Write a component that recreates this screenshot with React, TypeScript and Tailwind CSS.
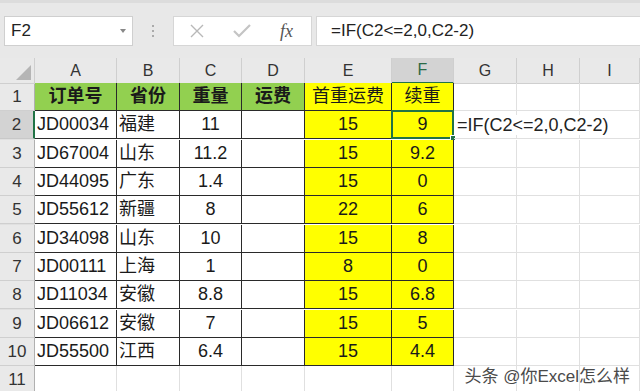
import React from 'react';

const cols = ['A', 'B', 'C', 'D', 'E', 'F', 'G', 'H', 'I'];

const rows: string[][] = [
  ['JD00034', '福建', '11', '', '15', '9'],
  ['JD67004', '山东', '11.2', '', '15', '9.2'],
  ['JD44095', '广东', '1.4', '', '15', '0'],
  ['JD55612', '新疆', '8', '', '22', '6'],
  ['JD34098', '山东', '10', '', '15', '8'],
  ['JD00111', '上海', '1', '', '8', '0'],
  ['JD11034', '安徽', '8.8', '', '15', '6.8'],
  ['JD06612', '安徽', '7', '', '15', '5'],
  ['JD55500', '江西', '6.4', '', '15', '4.4'],
];

const heads = ['订单号', '省份', '重量', '运费', '首重运费', '续重'];
const rowH = ['h-[28px]', 'h-[29px]', 'h-[28px]', 'h-[28px]', 'h-[29px]', 'h-[28px]', 'h-[28px]', 'h-[29px]', 'h-[28px]', 'h-[28px]'];
const gridCols = 'grid grid-cols-[35px_82px_63px_62px_63px_87px_62px_63px_63px_1fr]';

const font = "font-['Liberation_Sans','Noto_Sans_CJK_SC',sans-serif]";

export default function App() {
  return (
    <div className={`w-[640px] h-[391px] overflow-hidden bg-white text-[#222] ${font}`}>
      {/* Toolbar with name box and formula bar */}
      <div className="h-[58px] bg-[#e8e8e8] border-t-[3px] border-[#dcdcdc] flex items-start pt-[13px] pl-[4px] gap-0">
        <div className="w-[129px] h-[30px] bg-white border border-[#cfcfcf] flex items-center justify-between pl-[6px] pr-[6px]">
          <span className="text-[17px] text-[#222]">F2</span>
          <span className="w-0 h-0 border-l-[3px] border-r-[3px] border-t-[4px] border-l-transparent border-r-transparent border-t-[#888]" />
        </div>
        <div className="w-[40px] h-[30px] flex flex-col items-center justify-center gap-[3px]">
          <span className="w-[2px] h-[2px] bg-[#aaa]" />
          <span className="w-[2px] h-[2px] bg-[#aaa]" />
          <span className="w-[2px] h-[2px] bg-[#aaa]" />
        </div>
        <div className="w-[139px] h-[30px] bg-white border border-[#d6d6d6] flex items-center justify-between px-[16px]">
          <svg width="14" height="14" viewBox="0 0 14 14">
            <path d="M1 1L13 13M13 1L1 13" stroke="#b8b8b8" strokeWidth="1.4" fill="none" />
          </svg>
          <svg width="18" height="14" viewBox="0 0 18 14">
            <path d="M1 7L6 12L17 1" stroke="#c4c4c4" strokeWidth="2.2" fill="none" />
          </svg>
          <span className="font-['Liberation_Serif',serif] italic text-[18px] text-[#555] pr-[2px]">fx</span>
        </div>
        <div className="ml-[4px] flex-1 h-[30px] bg-white border-y border-l border-[#d6d6d6] flex items-center pl-[14px]">
          <span className="text-[17px] text-[#222]">=IF(C2&lt;=2,0,C2-2)</span>
        </div>
      </div>

      {/* Column headers */}
      <div className={`${gridCols} h-[25px] bg-[#e9e9e9]`}>
        <div className="relative border-r border-b border-[#cfcfcf]">
          <div className="absolute right-[3px] bottom-[3px] w-0 h-0 border-l-[15px] border-t-[15px] border-l-transparent border-t-transparent border-b-0 border-r-[15px] border-r-[#b5b5b5]" />
        </div>
        {cols.map((c) => (
          <div
            key={c}
            className={
              c === 'F'
                ? 'flex items-center justify-center text-[16px] bg-[#d3d3d3] text-[#2b6a46] border-r border-[#cfcfcf] border-b-2 border-b-[#217346]'
                : 'flex items-center justify-center text-[16px] text-[#333] border-r border-b border-[#cfcfcf]'
            }
          >
            {c}
          </div>
        ))}
        <div className="border-b border-[#cfcfcf]" />
      </div>

      {/* Rows */}
      {[0, 1, 2, 3, 4, 5, 6, 7, 8, 9, 10].map((r) => {
        const h = r < 10 ? rowH[r] : 'h-[30px]';
        const inTable = r < 10;
        return (
          <div key={r} className={`${gridCols} ${h}`}>
            <div
              className={
                r === 1
                  ? 'flex items-center justify-center text-[17px] text-[#333] bg-[#d3d3d3] border-b border-[#c8c8c8] border-r-2 border-r-[#217346]'
                  : 'flex items-center justify-center text-[17px] text-[#333] bg-[#e9e9e9] border-b border-[#cfcfcf] border-r border-r-[#b0b0b0]'
              }
            >
              {r + 1}
            </div>
            {cols.map((c, ci) => {
              if (!inTable || ci > 5) {
                const formula = r === 1 && c === 'G';
                return (
                  <div key={c} className="relative border-r border-b border-[#e0e0e0]">
                    {formula && (
                      <span className="absolute z-10 left-[3px] top-[4px] leading-[20px] bg-white whitespace-nowrap text-[18px] text-[#222]">
                        =IF(C2&lt;=2,0,C2-2)
                      </span>
                    )}
                  </div>
                );
              }
              const header = r === 0;
              const bg = ci >= 4 ? 'bg-[#ffff00]' : header ? 'bg-[#92d050]' : 'bg-white';
              const text = header ? heads[ci] : rows[r - 1][ci];
              const align = header ? 'justify-center' : ci <= 1 ? 'justify-start pl-[2px]' : 'justify-center';
              const weight = header && ci < 4 ? 'font-bold' : '';
              const selected = r === 1 && c === 'F';
              return (
                <div
                  key={c}
                  className={`relative flex items-center ${align} ${bg} ${weight} text-[18px] text-[#1a1a1a] border-r border-b border-[#2a2a2a]`}
                >
                  {text}
                  {selected && (
                    <div className="absolute -left-px -top-px -right-px -bottom-px border-2 border-[#217346]">
                      <div className="absolute -right-[4px] -bottom-[4px] w-[6px] h-[6px] bg-[#217346] border border-white" />
                    </div>
                  )}
                </div>
              );
            })}
            <div className="border-b border-[#e0e0e0]" />
          </div>
        );
      })}

      {/* Watermark */}
      <div className="relative">
        <span className="absolute right-[10px] -top-[32px] text-[17px] text-[#4a4a4a] whitespace-nowrap [text-shadow:0_0_2px_#fff,0_0_2px_#fff]">
          头条 @你Excel怎么样
        </span>
      </div>
    </div>
  );
}
